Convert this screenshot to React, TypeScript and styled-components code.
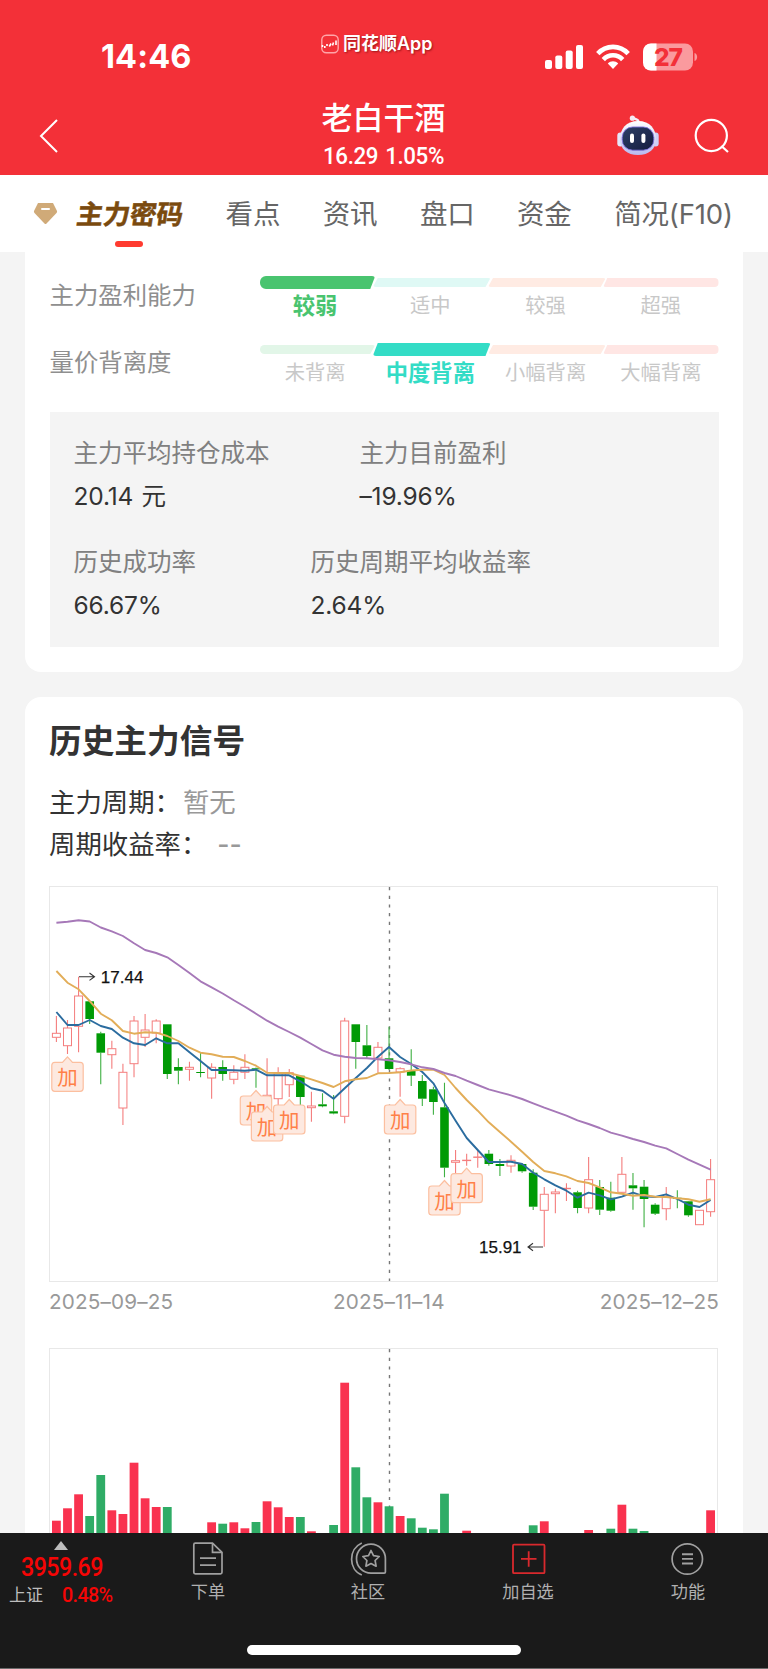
import React from "react";
import styled, { createGlobalStyle } from "styled-components";

const GlobalStyle = createGlobalStyle`
  * { box-sizing: border-box; }
  body {
    margin: 0;
    background: #f4f4f4;
    font-family: Inter, "Noto Sans CJK SC", sans-serif;
    color: #333;
  }
  svg { display: block; }
`;

const Screen = styled.div`
  width: 768px;
  height: 1669px;
  display: flex;
  flex-direction: column;
  overflow: hidden;
  background: #f4f4f4;
`;

/* ---------- header ---------- */

const Header = styled.header`
  position: relative;
  height: 175px;
  flex: none;
  background: #f33038;
  color: #fff;
`;

const StatusBar = styled.div`
  height: 100px;
  padding: 36px 70px 0 101px;
  display: flex;
  justify-content: space-between;
`;

const Clock = styled.div`
  font-size: 32.5px;
  font-weight: 700;
  line-height: 42px;
  letter-spacing: 0.1px;
`;

const StatusIcons = styled.div`
  display: flex;
  align-items: center;
  height: 42px;
`;

const AppMark = styled.div`
  position: absolute;
  left: 321px;
  top: 34px;
  display: flex;
  align-items: center;
  gap: 4px;
  font-size: 18px;
  font-weight: 600;
  line-height: 20px;
  white-space: nowrap;
  text-shadow: 1px 1px 2px rgba(90, 0, 0, 0.55);
`;

const TitleBar = styled.div`
  height: 75px;
  display: flex;
  align-items: flex-start;
  padding: 0 38px 0 38px;
`;

const BackSlot = styled.div`
  width: 232px;
  padding-top: 19px;
`;

const StockTitle = styled.div`
  width: 227px;
  text-align: center;
`;

const StockName = styled.div`
  font-size: 31px;
  font-weight: 500;
  line-height: 36px;
`;

const StockQuote = styled.div`
  font-family: Roboto, sans-serif;
  font-size: 24px;
  font-weight: 500;
  line-height: 24px;
  margin-top: 8px;
  letter-spacing: -0.4px;
  word-spacing: 2px;
  transform: scaleX(0.93);
`;

const Actions = styled.div`
  flex: 1;
  display: flex;
  justify-content: flex-end;
  gap: 35.5px;
  padding-top: 15px;
`;

/* ---------- tabs ---------- */

const Tabs = styled.nav`
  height: 77px;
  flex: none;
  background: #fff;
  display: flex;
  align-items: flex-start;
  padding: 0 35px 0 33px;
  justify-content: space-between;
`;

const Tab = styled.div`
  display: flex;
  position: relative;
  font-size: 27.5px;
  line-height: 78px;
  color: #666;
  white-space: nowrap;
  letter-spacing: -0.15px;
`;

const ActiveLabel = styled.span`
  margin-left: 19px;
  font-size: 26.7px;
  font-weight: 700;
  color: #7a4a0e;
  -webkit-text-stroke: 0.5px #7a4a0e;
  transform: skewX(-8deg);
`;

const Underline = styled.i`
  position: absolute;
  left: 82px;
  top: 66px;
  width: 28px;
  height: 6px;
  border-radius: 3px;
  background: #ff3b30;
`;

const GemSlot = styled.span`
  padding-top: 27px;
`;

/* ---------- content ---------- */

const Main = styled.main`
  flex: 1;
  min-height: 0;
  overflow: hidden;
  padding: 0 25px;
`;

const Card = styled.section<{ $continued?: boolean }>`
  background: #fff;
  border-radius: ${(p) => (p.$continued ? "0 0 16px 16px" : "16px 16px 0 0")};
  padding: ${(p) => (p.$continued ? "24px 24px 24.5px" : "24.5px 24px 0 24px")};
  margin-bottom: ${(p) => (p.$continued ? "25px" : "0")};
`;

const MeterRow = styled.div`
  height: 67px;
  display: flex;
`;

const MeterName = styled.div`
  width: 208.5px;
  padding: 7px 0 0 0.5px;
  font-size: 24.4px;
  line-height: 24px;
  color: #8f8f8f;
`;

const Meter = styled.div`
  width: 461px;
  display: grid;
  grid-template-columns: repeat(4, 1fr);
`;

const Level = styled.div`
  display: flex;
  flex-direction: column;
  align-items: center;
`;

const LevelTrack = styled.div<{ $first: boolean }>`
  width: 100%;
  height: 13px;
  padding-left: ${(p) => (p.$first ? 2.5 : 0)}px;
  display: flex;
  align-items: center;
`;

const LevelBar = styled.div<{ $color: string; $active: boolean; $place: "first" | "mid" | "last" }>`
  width: ${(p) => (p.$place === "last" ? "100%" : "calc(100% + 2.5px)")};
  height: ${(p) => (p.$active ? 13 : 9)}px;
  margin-right: ${(p) => (p.$place === "last" ? 0 : -2.5)}px;
  flex: none;
  background: ${(p) => p.$color};
  border-radius: ${(p) =>
    p.$place === "first" ? "6px 3px 3px 6px" : p.$place === "last" ? "3px 5px 5px 3px" : "3px"};
  clip-path: ${(p) => {
    if (p.$place === "first") return "polygon(0 0, 100% 0, calc(100% - 5px) 100%, 0 100%)";
    if (p.$place === "last") return "polygon(4px 0, 100% 0, 100% 100%, 0 100%)";
    return "polygon(5px 0, 100% 0, calc(100% - 5px) 100%, 0 100%)";
  }};
`;

const LevelText = styled.div<{ $color?: string }>`
  margin-top: 6px;
  font-size: ${(p) => (p.$color ? 22.3 : 20.3)}px;
  font-weight: ${(p) => (p.$color ? 700 : 400)};
  line-height: 22px;
  color: ${(p) => p.$color || "#c8c8c8"};
  white-space: nowrap;
`;

const Summary = styled.div`
  margin: 2px 0 0 0.5px;
  height: 235px;
  padding: 28px 24px 0;
  background: #f4f4f4;
`;

const SummaryRow = styled.div<{ $first: number }>`
  display: grid;
  grid-template-columns: ${(p) => p.$first}px auto;
  row-gap: 16.5px;
  margin-bottom: 40.5px;
  font-size: 24.5px;
  line-height: 26px;
`;

const Caption = styled.span`
  color: #808080;
`;

const Figure = styled.span`
  color: #333;
  letter-spacing: -0.15px;
  word-spacing: 1.5px;
`;

const CardTitle = styled.h2`
  margin: 0 0 19.5px;
  font-size: 32.7px;
  font-weight: 700;
  line-height: 40px;
  color: #333;
`;

const InfoLine = styled.div`
  font-size: 26.4px;
  line-height: 42px;
  display: flex;
  color: #333;
`;

const Muted = styled.span<{ $gap: number; $weight?: number }>`
  margin-left: ${(p) => p.$gap}px;
  font-weight: ${(p) => p.$weight || 400};
  color: #999;
`;

const PricePanel = styled.div`
  margin-top: 21px;
  height: 396px;
`;

const DateAxis = styled.div`
  margin-top: 8px;
  display: flex;
  font-size: 20.7px;
  line-height: 24px;
  letter-spacing: 0.15px;
  color: #999;
`;

const StartDate = styled.span`
  width: 284px;
`;

const EndDate = styled.span`
  margin-left: auto;
`;

const VolumePanel = styled.div`
  margin-top: 34px;
  height: 240px;
`;

/* ---------- bottom bar ---------- */

const BottomBar = styled.footer`
  height: 136.5px;
  flex: none;
  background: #1a1a1a;
  border-bottom: 1px solid #6b6b6b;
  display: flex;
  flex-direction: column;
  align-items: center;
`;

const BottomItems = styled.div`
  width: 100%;
  height: 112px;
  display: flex;
`;

const IndexCell = styled.div`
  width: 128px;
  padding: 8px 0 0 9px;
`;

const Arrow = styled.div`
  width: 0;
  margin-left: 45px;
  border: 7.5px solid transparent;
  border-top: 0;
  border-bottom: 9px solid #bdbdbd;
`;

const IndexValue = styled.div`
  margin: 5px 0 0 12px;
  font-family: Roboto, sans-serif;
  font-size: 25px;
  font-weight: 500;
  line-height: 26px;
  letter-spacing: -0.6px;
  color: #f50505;
  transform: scaleX(0.93);
  transform-origin: left;
`;

const IndexChange = styled.div`
  display: flex;
  align-items: center;
  margin-top: 3px;
  gap: 19px;
  font-size: 17px;
  line-height: 22px;
  color: #bdbdbd;

  b {
    font-family: Roboto, sans-serif;
    font-size: 21px;
    font-weight: 500;
    letter-spacing: -0.7px;
    color: #f50505;
    transform: scaleX(0.94);
    transform-origin: left;
  }
`;

const NavItem = styled.div`
  width: 160px;
  padding-top: 7px;
  display: flex;
  flex-direction: column;
  align-items: center;
  gap: 3px;
  font-size: 17.2px;
  line-height: 22px;
  color: #b0b0b0;
`;

const HomeIndicator = styled.div`
  width: 274px;
  height: 10px;
  border-radius: 5px;
  background: #fff;
`;

/* ---------- data ---------- */

type Kind = "up" | "down";
/* kind, high, body top, body bottom, low */
type Candle = [Kind, number, number, number, number];

const candles: Candle[] = [
  ["up", 136, 153.3, 157.3, 162], ["up", 140, 148, 165.7, 174], ["up", 96.7, 116, 146.3, 172.3],
  ["down", 121.3, 121.3, 139, 144], ["down", 151.7, 153.3, 172.7, 204.3], ["up", 160.7, 168.7, 174.7, 188.7],
  ["up", 183.7, 192.3, 228, 245], ["up", 136, 141, 183.7, 197.3], ["up", 134, 150, 157.3, 167],
  ["up", 139.3, 141, 153, 163.3], ["down", 144.3, 144.3, 194, 199], ["down", 178.3, 187, 190.7, 204.3],
  ["up", 181.7, 187.3, 189.3, 200.7], ["down", 172.7, 192, 192.6, 197.3], ["up", 183.3, 187.3, 198, 218.7],
  ["down", 180.3, 187, 194, 200.7], ["up", 185.3, 192.3, 199.3, 204.3], ["up", 174.3, 187.3, 192.3, 199],
  ["down", 187.5, 188.3, 189.3, 207.7], ["up", 178.3, 215.3, 222, 225], ["up", 187.3, 192.7, 218.7, 225],
  ["up", 189, 192.7, 204.7, 217], ["down", 195, 195.7, 217, 225], ["up", 211.7, 226, 227.7, 241.7],
  ["down", 213.3, 224.3, 226.3, 227.3], ["down", 215, 231.3, 233.5, 234.3], ["up", 137.7, 141, 236.3, 243.3],
  ["down", 144.3, 144.3, 162, 188.7], ["down", 145, 165.3, 176, 179], ["up", 162, 167.3, 178, 192.7],
  ["down", 146.7, 178.3, 189, 190], ["up", 187.3, 188.7, 192, 216.7], ["down", 169.3, 190.3, 195.7, 206],
  ["down", 195, 201, 218.7, 226], ["down", 206.7, 209.3, 222, 234.7], ["down", 202.7, 227.3, 287.7, 297.3],
  ["up", 270, 280.7, 282.3, 294], ["up", 273.7, 280.2, 280.6, 285.7], ["up", 270, 277, 277.4, 287.7],
  ["down", 270, 273.7, 284, 285.7], ["down", 279, 284, 286, 296], ["up", 275.3, 280.3, 286, 292.7],
  ["down", 283.3, 284, 291.3, 292.7], ["down", 289.3, 292.7, 326.7, 330], ["up", 307, 314.3, 330.3, 366.7],
  ["up", 308.7, 312, 313.7, 333.3], ["up", 303.3, 308.3, 308.7, 321], ["down", 310.7, 312.3, 328, 333.3],
  ["up", 277, 299.7, 328, 333.3], ["down", 300, 307, 329.7, 335], ["down", 301.7, 317.7, 330.7, 331.7],
  ["up", 277, 294.3, 312.3, 313.3], ["down", 293, 305.3, 308.3, 329.7], ["down", 300, 306.7, 319, 347.3],
  ["down", 323.3, 324.7, 333.7, 335], ["up", 307, 316.7, 328.7, 340.3], ["down", 310.3, 317.8, 318.2, 328.3],
  ["down", 321, 321.3, 335.3, 336.7], ["up", 330, 330.3, 344.7, 345], ["up", 279, 299.7, 331.7, 336.7],
];

const longAverage = [
  42.7, 41.7, 40.3, 41.5, 47.5, 51.3, 56, 63.3, 70, 73, 77.3, 85, 93, 101.3, 107.3, 113.5, 120.3, 126.7, 133.7,
  140.7, 146.7, 152, 157.7, 164, 170.3, 174.7, 176.7, 178, 178.3, 179.3, 180.3, 182, 184.3, 187.3, 189, 193, 196,
  200.7, 205, 209.3, 212.3, 215.3, 219, 223.3, 227.7, 231.6, 235.6, 240.3, 244, 248, 252.7, 255.7, 259, 262,
  265.7, 268.3, 274, 279.7, 284.7, 289.7,
];

const midAverage = [
  91, 102.7, 109.3, 121, 133.7, 140.3, 151, 153.7, 152.3, 152.7, 156, 161, 167.7, 172.7, 174.3, 176.7, 177, 181,
  185.7, 192.7, 193, 193, 196, 199.3, 203, 207, 201.3, 199.3, 198, 193.3, 193, 192.3, 190.5, 189.7, 189.7, 195,
  208, 220, 230.7, 242.3, 252, 261.7, 271.7, 282, 291, 293.3, 296.3, 301, 303, 307.3, 312.3, 313.7, 315.7, 315,
  316.7, 317, 318.3, 319.3, 321.7, 319.3,
];

const shortAverage = [
  132, 145, 145, 140, 146, 149, 157.7, 163.3, 165, 158.3, 163.3, 163.3, 172.3, 181, 190, 190, 190.3, 190.7,
  189.7, 195.3, 195.3, 195.3, 201.3, 208.3, 210.7, 218.7, 208.3, 198, 188, 176.7, 167, 177, 184, 192, 203.3, 223,
  240.7, 258, 270, 282, 282, 281.7, 284, 292.7, 299.3, 305.3, 310.7, 317.7, 312.7, 315.3, 319.3, 316.7, 312.7,
  316.3, 317, 314.3, 319, 324.7, 327, 320,
];

const addSignals = [
  { day: 1, y: 176.3 },
  { day: 18, y: 210 },
  { day: 19, y: 226 },
  { day: 21, y: 219 },
  { day: 31, y: 219 },
  { day: 35, y: 300 },
  { day: 37, y: 287.7 },
];

/* day, kind, bar top */
const volumes: [number, Kind, number][] = [
  [0, "up", 172.7], [1, "up", 160.3], [2, "up", 146.3], [3, "down", 168], [4, "down", 127], [5, "up", 162.3],
  [6, "up", 166], [7, "up", 114.7], [8, "up", 150.3], [9, "up", 159], [10, "down", 159], [14, "up", 174.3],
  [15, "down", 175.7], [16, "up", 174.3], [17, "up", 180.3], [18, "down", 174], [19, "up", 153.3],
  [20, "up", 159.3], [21, "up", 169], [22, "down", 169], [23, "up", 183.3], [25, "down", 177], [26, "up", 34.7],
  [27, "down", 119.3], [28, "down", 149.3], [29, "up", 154.3], [30, "down", 158.3], [31, "up", 168],
  [32, "down", 170.3], [33, "down", 179.7], [34, "down", 181.3], [35, "down", 145.7], [37, "up", 182.7],
  [43, "down", 177.3], [44, "up", 173.3], [48, "up", 182], [50, "down", 180.7], [51, "up", 156.7],
  [52, "down", 180.7], [53, "down", 183], [59, "up", 162.3],
];

const dayX = (i: number) => 56.4 + i * 11.088;
const toPoints = (ys: number[]) => ys.map((y, i) => `${dayX(i).toFixed(1)},${y}`).join(" ");

const meters = [
  { name: "主力盈利能力", active: 0, color: "#49c46f", levels: ["较弱", "适中", "较强", "超强"] },
  { name: "量价背离度", active: 1, color: "#33dcc6", levels: ["未背离", "中度背离", "小幅背离", "大幅背离"] },
];
const paleColors = ["#e2f6e8", "#dff9f5", "#ffebe3", "#ffe6e4"];

/* ---------- drawings ---------- */

const SignalIcon = () => (
  <svg width="39" height="26" viewBox="0 0 39 26" fill="#fff">
    <rect x="0" y="16" width="7" height="9" rx="2" />
    <rect x="10.3" y="11.5" width="7" height="13.5" rx="2" />
    <rect x="20.7" y="6.5" width="7" height="18.5" rx="2" />
    <rect x="31" y="1" width="7" height="24" rx="2" />
  </svg>
);

const WifiIcon = () => (
  <svg width="34" height="26" viewBox="0 0 34 26" fill="none" stroke="#fff" strokeWidth="4.6">
    <path d="M1.8 9.6 C10 0.6 24 0.6 32.2 9.6" />
    <path d="M7.3 15.6 C12.6 9.8 21.4 9.8 26.7 15.6" />
    <path d="M17 25 L11.8 19.4 C14.6 16.4 19.4 16.4 22.2 19.4 Z" fill="#fff" stroke="none" />
  </svg>
);

const BatteryIcon = () => (
  <svg width="55" height="28" viewBox="0 0 55 28">
    <defs>
      <clipPath id="cell">
        <rect x="0" y="0.5" width="50" height="27" rx="8" />
      </clipPath>
    </defs>
    <g clipPath="url(#cell)">
      <rect width="50" height="28" fill="#fa9a9e" />
      <rect width="13.5" height="28" fill="#fff" />
    </g>
    <path d="M51.5 10 C55 11 55 17 51.5 18 Z" fill="#fa9a9e" />
    <text x="25" y="22.8" textAnchor="middle" fontFamily="Inter" fontWeight="800" fontSize="24.5" letterSpacing="-1" fill="#f33038">
      27
    </text>
  </svg>
);

const AppLogo = () => (
  <svg width="18" height="20" viewBox="0 0 18 20" fill="none">
    <rect x="0.8" y="1.3" width="16.4" height="17.4" rx="4.5" stroke="#ffa5a8" strokeWidth="1.4" />
    <path d="M1.5 13 V11 M3.8 14 V12 M6 12 V10 M8.3 12.5 L10 9.5 M11.5 11.5 L12.5 8.5 M15 11 V6.5" stroke="#fff" strokeWidth="1.6" />
  </svg>
);

const RobotIcon = () => (
  <svg width="42" height="41" viewBox="0 0 42 41">
    <defs>
      <linearGradient id="shell" x1="0" y1="0" x2="0" y2="1">
        <stop offset="0" stopColor="#ffffff" />
        <stop offset="1" stopColor="#b9b8ef" />
      </linearGradient>
      <linearGradient id="visor" x1="0" y1="0" x2="1" y2="1">
        <stop offset="0" stopColor="#2c3f66" />
        <stop offset="1" stopColor="#151c3e" />
      </linearGradient>
    </defs>
    <path d="M21.5 8 C22 5 20 4.6 16.5 3.2" fill="none" stroke="#f4eefa" strokeWidth="2.4" strokeLinecap="round" />
    <circle cx="15.4" cy="3.2" r="2.6" fill="#f6e9f2" />
    <rect x="0.3" y="17.5" width="6" height="14" rx="3" fill="#e5e6fa" />
    <rect x="35.7" y="17.5" width="6" height="14" rx="3" fill="#cfd0f6" />
    <path d="M21 6 C33 6 39 14 39 24 C39 34 32 40 21 40 C10 40 3 34 3 24 C3 14 9 6 21 6Z" fill="url(#shell)" />
    <rect x="5.2" y="12" width="31.6" height="23.2" rx="10.5" fill="url(#visor)" stroke="#7c6fd8" strokeWidth="0.9" />
    <rect x="13" y="18.5" width="4" height="9.5" rx="2" fill="#fff" />
    <rect x="24.4" y="18.5" width="4" height="9.5" rx="2" fill="#fff" />
  </svg>
);

const SearchIcon = () => (
  <svg width="36" height="38" viewBox="0 0 36 38" fill="none" stroke="#fff" strokeWidth="2.2">
    <circle cx="17.3" cy="20.5" r="15.6" />
    <path d="M27.4 31 L34 37" />
  </svg>
);

const DocumentIcon = () => (
  <svg width="36" height="38" viewBox="0 0 36 38" fill="none" stroke="#a0a0a0" strokeWidth="1.7">
    <path d="M22.5 3.2 H5.3 Q3.8 3.2 3.8 4.7 V32.3 Q3.8 33.8 5.3 33.8 H30.5 Q32 33.8 32 32.3 V12.3 Z" />
    <path d="M22.5 3.2 V12.3 H32" />
    <path d="M10 18.2 H26 M10 25.2 H26" />
  </svg>
);

const CommunityIcon = () => (
  <svg width="38" height="38" viewBox="0 0 38 38" fill="none" stroke="#a0a0a0" strokeWidth="1.7">
    <path d="M12.8 3 C-0.8 9 -0.8 29.5 12.8 35" />
    <path d="M22 4.2 A14.5 14.5 0 1 0 22 33.2 H35.2 Q36.4 33.2 36.4 32 V18.7 A14.4 14.5 0 0 0 22 4.2Z" />
    <path
      d="M22 10.5 L24.5 15.7 L30.2 16.5 L26.1 20.5 L27.1 26.2 L22 23.5 L16.9 26.2 L17.9 20.5 L13.8 16.5 L19.5 15.7Z"
      strokeLinejoin="round"
    />
  </svg>
);

const AddIcon = () => (
  <svg width="38" height="38" viewBox="0 0 38 38" fill="none" stroke="#d9292d" strokeWidth="1.8">
    <rect x="4" y="4.7" width="31.5" height="28.5" rx="1" />
    <path d="M12 18.9 H27.5 M19.7 11.2 V26.7" />
  </svg>
);

const MenuIcon = () => (
  <svg width="38" height="38" viewBox="0 0 38 38" fill="none" stroke="#a0a0a0" strokeWidth="1.7">
    <circle cx="18.3" cy="19" r="15.2" />
    <path d="M13 14.3 H24 M13 18.9 H24 M13 23.5 H24" strokeWidth="1.9" />
  </svg>
);

const CandleMark = ({ day, candle }: { day: number; candle: Candle }) => {
  const [kind, high, top, bottom, low] = candle;
  const x = dayX(day);
  const color = kind === "up" ? "#f47d7d" : "#009a05";
  const wick = kind === "up" ? "#f47d7d" : "#3fb043";
  return (
    <g>
      <path d={`M${x} ${high}V${top}M${x} ${bottom}V${low}`} stroke={wick} strokeWidth="1.1" />
      {kind === "up" ? (
        <rect x={x - 4} y={top} width="8" height={bottom - top} fill="#fff" stroke={color} strokeWidth="1" />
      ) : (
        <rect x={x - 4.3} y={top} width="8.6" height={Math.max(bottom - top, 1)} fill={color} />
      )}
    </g>
  );
};

const AddTag = ({ x, y }: { x: number; y: number }) => (
  <g transform={`translate(${x} ${y})`}>
    <path
      d="M0 0.5 L5 6 H12.7 Q15.7 6 15.7 9 V32 Q15.7 35 12.7 35 H-12.7 Q-15.7 35 -15.7 32 V9 Q-15.7 6 -12.7 6 H-5 Z"
      fill="#fde9e0"
      stroke="#fcbf9f"
      strokeWidth="1.2"
    />
    <text x="0" y="29" textAnchor="middle" fontFamily="'Noto Sans CJK SC'" fontSize="20.5" fill="#ff8048">
      加
    </text>
  </g>
);

const PriceChart = () => (
  <svg width="670" height="396" viewBox="49 6 670 396">
    <rect x="49.5" y="6.5" width="668" height="395" fill="none" stroke="#e8e8e8" />
    <path d="M389.5 7V401" stroke="#777" strokeWidth="1.4" strokeDasharray="3.2 5.5" />
    {candles.map((candle, i) => (
      <CandleMark key={i} day={i} candle={candle} />
    ))}
    <g fill="none" strokeWidth="1.9" strokeLinejoin="round">
      <polyline points={toPoints(shortAverage)} stroke="#2b6c9f" />
      <polyline points={toPoints(midAverage)} stroke="#e2ad58" />
      <polyline points={toPoints(longAverage)} stroke="#a678b8" />
    </g>
    {addSignals.map((s) => (
      <AddTag key={s.day} x={dayX(s.day)} y={s.y} />
    ))}
    <g fill="none" stroke="#333" strokeWidth="1.1">
      <path d="M79 96.7H94M89.5 93L94.5 96.7L89.5 100.4" />
      <path d="M543 367H528M533 363.3L528 367L533 370.7" />
    </g>
    <g fontFamily="'Liberation Sans', sans-serif" fontSize="17" fill="#111" stroke="#111" strokeWidth="0.25">
      <text x="100.8" y="103">17.44</text>
      <text x="479" y="373.3">15.91</text>
    </g>
  </svg>
);

const VolumeChart = () => (
  <svg width="670" height="240" viewBox="49 0 670 240">
    <rect x="49.5" y="0.5" width="668" height="239" fill="none" stroke="#e8e8e8" />
    <path d="M389.5 1V200" stroke="#777" strokeWidth="1.4" strokeDasharray="3.2 5.5" />
    {volumes.map(([day, kind, top]) => (
      <rect
        key={day}
        x={dayX(day) - 4.4}
        y={top}
        width="8.8"
        height={239 - top}
        fill={kind === "up" ? "#f9324f" : "#2fac66"}
      />
    ))}
  </svg>
);

/* ---------- page ---------- */

export default function App() {
  return (
    <Screen>
      <GlobalStyle />
      <Header>
        <StatusBar>
          <Clock>14:46</Clock>
          <StatusIcons>
            <SignalIcon />
            <svg width="12" height="1" />
            <WifiIcon />
            <svg width="13" height="1" />
            <BatteryIcon />
          </StatusIcons>
        </StatusBar>
        <AppMark>
          <AppLogo />
          <span>同花顺App</span>
        </AppMark>
        <TitleBar>
          <BackSlot>
            <svg width="21" height="34" viewBox="0 0 21 34" fill="none" stroke="#fff" strokeWidth="2">
              <path d="M19 1L3 17L19 33" />
            </svg>
          </BackSlot>
          <StockTitle>
            <StockName>老白干酒</StockName>
            <StockQuote>16.29 1.05%</StockQuote>
          </StockTitle>
          <Actions>
            <RobotIcon />
            <SearchIcon />
          </Actions>
        </TitleBar>
      </Header>

      <Tabs>
        <Tab>
          <GemSlot>
            <svg width="25" height="23" viewBox="0 0 25 23">
              <path
                d="M5 1H20L24 9Q24.4 10 23.5 11L13.3 21.7Q12.5 22.5 11.7 21.7L1.5 11Q0.6 10 1 9Z"
                fill="#d0aa78"
              />
              <path d="M9 7H16" stroke="#fff" strokeWidth="2" strokeLinecap="round" />
            </svg>
          </GemSlot>
          <ActiveLabel>主力密码</ActiveLabel>
          <Underline />
        </Tab>
        <Tab>看点</Tab>
        <Tab>资讯</Tab>
        <Tab>盘口</Tab>
        <Tab>资金</Tab>
        <Tab>简况(F10)</Tab>
      </Tabs>

      <Main>
        <Card $continued>
          {meters.map((meter) => (
            <MeterRow key={meter.name}>
              <MeterName>{meter.name}</MeterName>
              <Meter>
                {meter.levels.map((level, i) => {
                  const active = i === meter.active;
                  return (
                    <Level key={level}>
                      <LevelTrack $first={i === 0}>
                        <LevelBar
                          $active={active}
                          $color={active ? meter.color : paleColors[i]}
                          $place={i === 0 ? "first" : i === 3 ? "last" : "mid"}
                        />
                      </LevelTrack>
                      <LevelText $color={active ? meter.color : undefined}>{level}</LevelText>
                    </Level>
                  );
                })}
              </Meter>
            </MeterRow>
          ))}
          <Summary>
            <SummaryRow $first={286}>
              <Caption>主力平均持仓成本</Caption>
              <Caption>主力目前盈利</Caption>
              <Figure>20.14 元</Figure>
              <Figure>–19.96%</Figure>
            </SummaryRow>
            <SummaryRow $first={237}>
              <Caption>历史成功率</Caption>
              <Caption>历史周期平均收益率</Caption>
              <Figure>66.67%</Figure>
              <Figure>2.64%</Figure>
            </SummaryRow>
          </Summary>
        </Card>

        <Card>
          <CardTitle>历史主力信号</CardTitle>
          <InfoLine>
            主力周期：<Muted $gap={2}>暂无</Muted>
          </InfoLine>
          <InfoLine>
            周期收益率：<Muted $gap={10} $weight={500}>--</Muted>
          </InfoLine>
          <PricePanel>
            <PriceChart />
          </PricePanel>
          <DateAxis>
            <StartDate>2025–09–25</StartDate>
            <span>2025–11–14</span>
            <EndDate>2025–12–25</EndDate>
          </DateAxis>
          <VolumePanel>
            <VolumeChart />
          </VolumePanel>
        </Card>
      </Main>

      <BottomBar>
        <BottomItems>
          <IndexCell>
            <Arrow />
            <IndexValue>3959.69</IndexValue>
            <IndexChange>
              上证<b>0.48%</b>
            </IndexChange>
          </IndexCell>
          <NavItem>
            <DocumentIcon />
            下单
          </NavItem>
          <NavItem>
            <CommunityIcon />
            社区
          </NavItem>
          <NavItem>
            <AddIcon />
            加自选
          </NavItem>
          <NavItem>
            <MenuIcon />
            功能
          </NavItem>
        </BottomItems>
        <HomeIndicator />
      </BottomBar>
    </Screen>
  );
}
